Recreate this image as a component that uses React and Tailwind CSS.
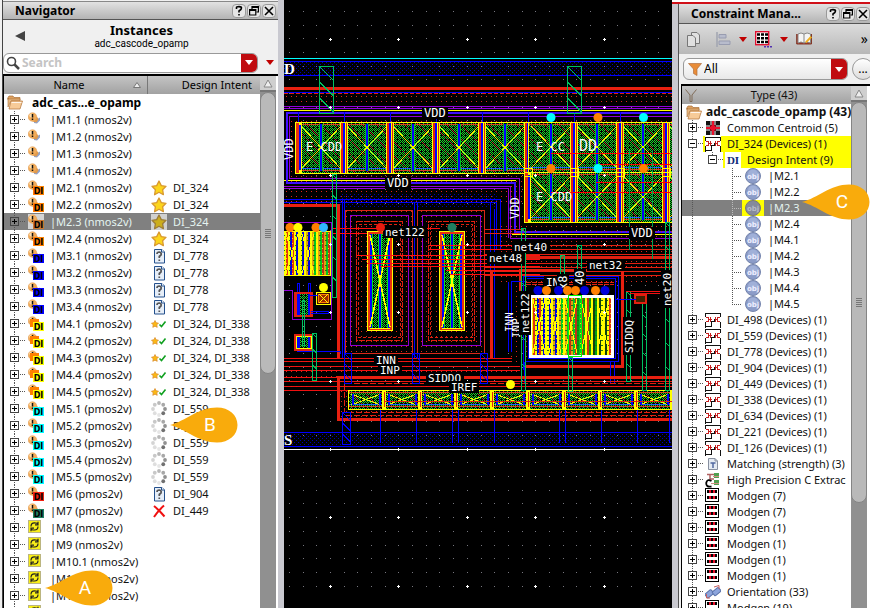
import React from "react";

const ORANGE = "#ff8000";

/* ---------- shared controls ---------- */

function TitleBar({ title, className }) {
  return (
    <header className={"flex items-center border-b border-[#555] bg-linear-to-b from-[#e2e2e2] to-[#b4b4b4] " + className}>
      <h2 className="flex-1 truncate text-[12px] leading-[18px] font-bold">{title}</h2>
      <div className="flex gap-px">
        {["Help", "Restore", "Close"].map((n) => (
          <button key={n} aria-label={n} className="h-3.5 w-3.5 rounded-[4px] border border-[#999] bg-[#e6e6e6]">
            <svg viewBox="0 0 12 12" className="h-3 w-3" fill="none" stroke="#000" strokeWidth="1.6">
              {n === "Help" && <path d="M3.5 4V2.5Q3.5 1.6 6 1.6T8.5 3Q8.500 4.500 6 6V7.500M6 9V10.500" />}
              {n === "Restore" && (
                <g strokeWidth="1.2">
                  <path d="M4 4V1.600H10.400V7H8.500M4 2.300H10.400" />
                  <path d="M1.600 4.600H7.800V10H1.600ZM1.600 5.300H7.800" />
                </g>
              )}
              {n === "Close" && <path d="M2 2L10 10M10 2L2 10" />}
            </svg>
          </button>
        ))}
      </div>
    </header>
  );
}

function Down({ fill = "#c00000" }) {
  return (
    <svg viewBox="0 0 8 5" className="h-[5px] w-2 shrink-0">
      <path d="M0 0H8L4 5Z" fill={fill} />
    </svg>
  );
}

function ScrollBar({ thumb }) {
  return (
    <div className="flex w-4 shrink-0 flex-col bg-[#909090]">
      <button aria-label="Scroll up" className="flex h-4 items-center justify-center border-b-2 border-[#777] bg-[#cfcfcf]">
        <svg viewBox="0 0 10 9" className="h-[9px] w-2.5">
          <path d="M1 8L5 1L9 8Z" fill="#eee" stroke="#888" />
        </svg>
      </button>
      <div className={"flex flex-col items-center justify-center gap-px rounded-b-lg rounded-t-lg border border-[#858585] bg-[#b9b9b9] " + thumb}>
        {[0, 1, 2, 3, 4].map((i) => (
          <i key={i} className="block h-px w-1.5 bg-[#777]" />
        ))}
      </div>
    </div>
  );
}

function Twig({ open, selected, h = 17, w = 20, last }) {
  const c = (h - 1) / 2;
  return (
    <button aria-label={open ? "Collapse" : "Expand"} className="shrink-0">
      <svg width={w} height={h} shapeRendering="crispEdges" className="block">
        <path d={`M6.500 0V${last ? c : h}M6 ${Math.floor(c) + 0.5}H17`} stroke="#555" strokeDasharray="1 1" fill="none" />
        <rect x="2.500" y={Math.floor(c) - 3.5} width="8" height="8" fill={selected ? "#808080" : "#fff"} stroke="#444" />
        <path d={`M4 ${Math.floor(c) + 0.5}H9` + (open ? "" : `M6.500 ${Math.floor(c) - 2}V${Math.floor(c) + 3}`)} stroke="#000" />
      </svg>
    </button>
  );
}

function Folder() {
  return (
    <svg viewBox="0 0 16 15" className="h-[15px] w-4 shrink-0">
      <path d="M1 2.500L2 1H6L7 2.500H13V5H1Z" fill="#dca060" stroke="#a97038" strokeWidth=".7" />
      <path d="M1 3V12L4 6H13V4H1Z" fill="#e8b880" stroke="#a97038" strokeWidth=".6" />
      <path d="M4 6H15.500L13 14H2Z" fill="#f7cb98" stroke="#b87c44" strokeWidth=".8" />
      <path d="M4.500 7.500H14.500" stroke="#fff" strokeWidth=".8" />
    </svg>
  );
}

/* ---------- navigator ---------- */

function DeviceIcon({ tag, selected }) {
  if (tag === "sync")
    return (
      <svg viewBox="0 0 18 17" className="h-[17px] w-[18px] shrink-0">
        <rect x=".5" y="1.500" width="12" height="12" fill="#f8ee18" stroke="#bbb580" />
        <g fill="none" stroke="#222" strokeWidth="1.200">
          <path d="M3 7.500Q3 3.800 6.500 3.800T9.500 5.300M10 2.800V5.800H7" />
          <path d="M10 7.500Q10 11 6.500 11T3.500 9.800M3 12.200V9.200H6" />
        </g>
      </svg>
    );
  return (
    <svg viewBox="0 0 18 17" className="h-[17px] w-[18px] shrink-0">
      {selected && <rect y="1" width="16" height="15" fill="#d4d4d4" />}
      <path d="M6 10L12 6.500V9.500L9 12.500L6 12Z" fill="#8fa2cc" />
      <path d="M5 6Q9.500 4.500 10.500 8.500L8.500 11.500L4.500 10.500Z" fill="#e09a4c" />
      <circle cx="4.500" cy="6" r="4.300" fill="#f2ab58" stroke="#dc9850" strokeWidth=".5" />
      <circle cx="3.300" cy="4.500" r="2" fill="#ffdca8" />
      <path d="M4.500 3V6.500M4.500 7.500V9" stroke="#111" strokeWidth="1.500" />
      {tag === "#ffff00" && <rect x="2" y="4" width="9" height="8" fill={ORANGE} />}
      {tag && (
        <g>
          <rect x="5" y="7" width="11" height="9" fill={selected ? "#c87830" : tag} />
          <text x="10.500" y="14.500" textAnchor="middle" fontSize="8" fontWeight="bold" fontFamily="DejaVu Sans">
            DI
          </text>
        </g>
      )}
    </svg>
  );
}

const STAR = "M8 1L10.300 5.600L15 6.300L11.600 9.700L12.400 14.700L8 12.300L3.600 14.700L4.400 9.700L1 6.300L5.700 5.600Z";

function StatusIcon({ kind, selected }) {
  return (
    <svg viewBox="0 0 16 16" className="h-4 w-4 shrink-0">
      {selected && <rect width="16" height="16" fill="#d0d0d0" />}
      {kind === "star" && (
        <path d={STAR} fill={selected ? "#ccae1c" : "#fcd51c"} stroke={selected ? "#9c7c38" : "#d89830"} strokeWidth="1.300" strokeLinejoin="round" />
      )}
      {kind === "ok" && (
        <g>
          <path d={STAR} transform="translate(0 4) scale(.5)" fill="#fcb914" stroke="#d88c30" strokeWidth="1.500" />
          <path d="M8.500 8.500L10.500 10.500L14.500 5.500" fill="none" stroke="#10a020" strokeWidth="1.600" />
        </g>
      )}
      {kind === "ask" && (
        <g>
          <path d="M3.500 1.500H11L13.500 4V15H3.500Z" fill="#e6eef8" stroke="#24508c" />
          <path d="M10.500 1.500V4H13.500" fill="#fff" stroke="#24508c" />
          <path d="M6 6Q6 4 8.300 4Q10.800 4.500 10 7L8.300 8.500V10M8.300 11.500V13" fill="none" stroke="#555" strokeWidth="1.700" />
        </g>
      )}
      {kind === "wait" &&
        [0, 1, 2, 3, 4, 5, 6, 7].map((i) => (
          <circle
            key={i}
            cx={8 + 6 * Math.cos((i * Math.PI) / 4)}
            cy={8 + 6 * Math.sin((i * Math.PI) / 4)}
            r="1.900"
            fill={["#909090", "#707070", "#e6e6e6", "#dedede", "#d4d4d4", "#c8c8c8", "#b8b8b8", "#a8a8a8"][i]}
          />
        ))}
      {kind === "bad" && <path d="M3 3Q8 7 13.500 13.500M13 2.500Q7 8 3 14" fill="none" stroke="#f01010" strokeWidth="2" />}
    </svg>
  );
}

const instances = [
  ...["M1.1", "M1.2", "M1.3", "M1.4"].map((n) => [n, "nmos2v"]),
  ...["M2.1", "M2.2", "M2.3", "M2.4"].map((n) => [n, "nmos2v", ORANGE, "star", "DI_324"]),
  ...["M3.1", "M3.2", "M3.3", "M3.4"].map((n) => [n, "nmos2v", "#0000ff", "ask", "DI_778"]),
  ...["M4.1", "M4.2", "M4.3", "M4.4", "M4.5"].map((n) => [n, "pmos2v", "#ffff00", "ok", "DI_324, DI_338"]),
  ...["M5.1", "M5.2", "M5.3", "M5.4", "M5.5"].map((n) => [n, "pmos2v", "#00ffff", "wait", "DI_559"]),
  ["M6", "pmos2v", "#f02010", "ask", "DI_904"],
  ["M7", "pmos2v", "#208060", "bad", "DI_449"],
  ...["M8", "M9", "M10.1", "M10.2", "M10.3", "M10.4"].map((n) => [n, "nmos2v", "sync"]),
];

function Navigator() {
  return (
    <aside className="flex w-[284px] shrink-0 border-r-[6px] border-[#c9c9d0] bg-[#f0f0f0] pl-0.5">
      <div className="flex min-w-0 flex-1 flex-col border-l border-[#444] pt-px">
        <TitleBar title="Navigator" className="h-[19px] shrink-0 border-t border-t-[#888] pr-0.5 pl-3" />
        <div className="flex h-8 shrink-0 items-center pl-3">
          <button aria-label="Back">
            <svg viewBox="0 0 10 10" className="h-2.5 w-2.5">
              <path d="M10 0V10L0 5Z" fill="#444" />
            </svg>
          </button>
          <div className="flex-1 pr-5 text-center">
            <h3 className="text-[13px] leading-[14px] font-bold">Instances</h3>
            <p className="font-[Roboto,sans-serif] text-[10px] leading-[13px]">adc_cascode_opamp</p>
          </div>
        </div>
        <div className="flex h-[22px] shrink-0 items-center gap-2 pb-px">
          <label className="flex h-5 flex-1 items-center overflow-hidden rounded-md border border-[#999] bg-white pl-0.5">
            <svg viewBox="0 0 14 14" className="h-3.5 w-3.5 shrink-0" fill="none" stroke="#444">
              <circle cx="5.500" cy="5.500" r="4" strokeWidth="1.600" />
              <path d="M8.500 8.500L13 13" strokeWidth="2.500" />
            </svg>
            <input aria-label="Search" placeholder="Search" className="ml-0.5 min-w-0 flex-1 text-[12px] font-bold outline-none placeholder:text-[#c4c4c4]" />
            <button aria-label="Search options" className="flex h-full w-4 items-center justify-center bg-[#c00c10]">
              <Down fill="#fff" />
            </button>
          </label>
          <button aria-label="Filter" className="pr-1">
            <Down />
          </button>
        </div>
        <div className="flex min-h-0 flex-1 border-t-2 border-l border-black bg-white">
          <div className="min-w-0 flex-1 overflow-hidden">
            <table className="w-full table-fixed border-collapse">
              <thead>
                <tr className="h-[18px] bg-linear-to-b from-[#c4c4c4] to-[#a2a2a2] text-[11px] leading-[16px]">
                  <th className="w-[143px] border-r border-[#777] p-0 font-normal">
                    <span className="flex items-center justify-end gap-12 pr-1.5">
                      Name
                      <svg viewBox="0 0 8 6" className="h-1.5 w-2">
                        <path d="M.5 5.500L4 .5L7.500 5.500Z" fill="#eee" stroke="#777" />
                      </svg>
                    </span>
                  </th>
                  <th className="p-0 pr-2 text-right font-normal">Design Intent</th>
                </tr>
              </thead>
              <tbody className="text-[11px] leading-[17px] whitespace-pre">
                <tr className="h-[17px]">
                  <td colSpan={2} className="p-0">
                    <span className="flex h-[17px] items-center gap-1.5 pl-[3px] text-[12px] font-bold">
                      <Folder /> adc_cas...e_opamp
                    </span>
                  </td>
                </tr>
                {instances.map(([n, type, tag, kind, intent]) => {
                  const sel = n === "M2.3";
                  return (
                    <tr key={n} className={sel ? "h-[17px] bg-[#808080] text-[#e4f4f0]" : "h-[17px] text-[#111]"}>
                      <td className="p-0">
                        <span className="flex h-[17px] items-center pl-1">
                          <Twig selected={sel} />
                          <DeviceIcon tag={tag} selected={sel} />
                          <span className="pl-1">{`|M${n.slice(1)} (${type})`}</span>
                        </span>
                      </td>
                      <td className="p-0">
                        {kind && (
                          <span className="flex h-[17px] items-center gap-1.5 pl-1">
                            <StatusIcon kind={kind} selected={sel} />
                            {intent}
                          </span>
                        )}
                      </td>
                    </tr>
                  );
                })}
              </tbody>
            </table>
          </div>
          <ScrollBar thumb="h-[282px]" />
          <div className="w-0.5 bg-white" />
        </div>
      </div>
    </aside>
  );
}

/* ---------- layout canvas ---------- */

const gridDots = Array.from({ length: 29 }, (_, i) =>
  Array.from({ length: 43 }, (_, j) => `M${Math.round(289 + i * 13.68)} ${Math.round(11 + j * 13.68)}h1v1h-1z`).join("")
).join("");

const Ladder = ({ x, y, w, h, c = "#00c060", n = 3 }) => (
  <g stroke={c} fill="none">
    <rect x={x + 0.5} y={y + 0.5} width={w} height={h} />
    {Array.from({ length: n }, (_, i) => {
      const top = y + (i * h) / n;
      return <path key={i} d={`M${x} ${top}L${x + w} ${top + Math.min(h / n, w)}`} />;
    })}
  </g>
);

const Note = ({ x, y, t, w, v, s = 12, bg = true }) => (
  <g transform={v ? `translate(${x} ${y}) rotate(-90)` : `translate(${x} ${y})`}>
    {bg && <rect x="-2" y="-10" width={w + 4} height="12" fill="#000" />}
    <text fill="#fff" fontSize={s} fontFamily="DejaVu Sans Mono, monospace">
      {t}
    </text>
  </g>
);

function ArrayBlock({ x, y, h, count, pitch }) {
  const w = count * pitch;
  const small = pitch < 40;
  return (
    <g>
      <rect x={x} y={y} width={w} height={h} fill="#000" />
      <rect x={x} y={y} width={w} height={h} fill="url(#mesh)" />
      <rect x={x} y={y} width={w} height={h} fill="url(#streak)" />
      <path d={`M${x} ${y + 2.5}H${x + w}M${x} ${y + h - 2.5}H${x + w}`} stroke="#d84020" />
      <path d={`M${x} ${y + h - 4.5}H${x + w}`} stroke="#2060ff" />
      {Array.from({ length: count }, (_, i) => {
        const l = x + i * pitch;
        const r = l + pitch;
        const m = l + pitch / 2;
        return (
          <g key={i}>
            {!small && (
              <g>
                <rect x={m - 2} y={y + 2} width="4" height={h - 4} fill="#00c020" />
                <rect x={m - 1} y={y + 2} width="2" height={h - 4} fill="#0000ff" />
              </g>
            )}
            <path d={`M${l + 3} ${y + 4}L${r - 3} ${y + h - 4}M${r - 3} ${y + 4}L${l + 3} ${y + h - 4}`} stroke="#f0f000" />
            {small ? (
              <g>
                <path d={`M${l + 5} ${y + 4}V${y + h - 4}M${r - 4} ${y + 4}V${y + h - 4}`} stroke="#0000ff" strokeWidth="2" />
                <rect x={r - 2} y={y} width="4" height={h} fill="#ffff00" />
                <rect x={r} y={y + 2} width="1" height={h - 4} fill="#e02010" />
              </g>
            ) : (
              <g>
                <rect x={r - 4} y={y} width="8" height={h} fill="#ffff00" />
                <rect x={r - 3} y={y} width="2" height={h} fill="#e02010" />
                <rect x={r - 1} y={y} width="2" height={h} fill="#0000ff" />
                <rect x={r + 2} y={y} width="1" height={h} fill="#e02010" />
              </g>
            )}
          </g>
        );
      })}
      <rect x={x + 0.5} y={y + 0.5} width={w} height={h} fill="none" stroke="#ffff00" />
    </g>
  );
}

const LeftEdge = ({ x, y, h }) => (
  <g>
    <rect x={x} y={y} width="7" height={h + 1} fill="#ffff00" />
    <rect x={x + 1} y={y + 1} width="3" height={h - 1} fill="#e83010" />
    <rect x={x + 4} y={y + 3} width="2" height={h - 6} fill="#0000ff" />
  </g>
);

const Mos = ({ x }) => (
  <g>
    <rect x={x - 22} y="210" width="67" height="143" fill="#000" stroke="#d82818" />
    <rect x={x - 22} y="210" width="67" height="143" fill="url(#rdots)" />
    <rect x={x - 16.5} y="215.500" width="58" height="130" fill="none" stroke="#9000d0" />
    <rect x={x - 10.500} y="221.500" width="46" height="119" fill="none" stroke="#e02010" strokeDasharray="6 1" />
    <rect x={x - 8.500} y="224.500" width="42" height="113" fill="none" stroke="#e02010" strokeDasharray="3 2" />
    <rect x={x} y="231" width="26" height="100" fill="#ffff00" />
    <rect x={x + 1} y="232" width="24" height="98" fill="#e83010" />
    <rect x={x + 3} y="234" width="20" height="94" fill="#0000ff" />
    <rect x={x + 5} y="234" width="16" height="94" fill="#000" />
    <rect x={x + 5} y="234" width="16" height="94" fill="url(#mesh)" />
    <rect x={x + 12} y="234" width="2" height="94" fill="#0000ff" />
    <path d={`M${x + 5.5} 234V328M${x + 11.5} 234V328M${x + 14.5} 234V328M${x + 20.5} 234V328`} stroke="#00e020" />
    <path d={`M${x + 3} 235L${x + 23} 327M${x + 23} 235L${x + 3} 327`} stroke="#ffff00" strokeWidth="1.500" />
    <path d={`M${x + 3} 328.500H${x + 23}`} stroke="#ffff00" />
  </g>
);

const SmallMos = ({ y, h }) => (
  <g>
    <rect x="294" y={y} width="19" height={h} fill="#e02010" />
    <rect x="297" y={y + 2} width="13" height={h - 4} fill="#0000ff" />
    <rect x="300" y={y + 2} width="8" height={h - 4} fill="#000" />
    <rect x="300" y={y + 2} width="8" height={h - 4} fill="url(#mesh)" />
  </g>
);

function Stripes({ x, y, w, h }) {
  const cols = ["#ffff00", "#00a010", "#e0a010", "#ffff00", "#104010", "#c03018", "#ffff00", "#e03010", "#ffff00", "#00c820", "#0000e0"];
  return (
    <g>
      <rect x={x} y={y} width={w} height={h} fill="#103000" />
      {Array.from({ length: Math.floor(w / 2) }, (_, i) => (
        <rect key={i} x={x + i * 2} y={y} width="2" height={h} fill={cols[(i * 7 + (i >> 2)) % cols.length]} />
      ))}
      <rect x={x} y={y} width={w} height={h} fill="url(#speck)" />
      {Array.from({ length: Math.floor(w / 16) }, (_, i) => (
        <path key={i} d={`M${x + i * 16 + 2} ${y + 2}L${x + i * 16 + 14} ${y + h - 2}M${x + i * 16 + 14} ${y + 2}L${x + i * 16 + 2} ${y + h - 2}`} stroke="#ffff00" />
      ))}
    </g>
  );
}

const pins = [
  [551, 117.5, "#00ffff"], [598, 117.5, ORANGE], [643.5, 117.5, "#00ffff"],
  [551, 168.5, ORANGE], [598, 168.5, "#00ffff"], [643.5, 168.5, ORANGE],
  [290, 227.5, ORANGE], [298, 227.5, "#ffff00"], [316, 227.5, ORANGE], [323.5, 227.5, "#30b8ff"],
  [380.5, 227.5, "#e81c10"], [452, 227.5, "#208060"], [323.5, 287.5, "#ffff00"], [510.5, 384.5, "#ffff00"],
  [538, 290.5, "#0000d8"], [546.5, 290.5, ORANGE], [558.5, 290.5, "#0000d8"], [567.5, 290.5, ORANGE],
  [575.5, 290.5, ORANGE], [584.5, 290.5, "#0000d8"], [595.5, 290.5, ORANGE], [605, 290.5, "#0000d8"],
];

function LayoutCanvas() {
  return (
    <main className="min-w-0 flex-1 overflow-hidden bg-black">
      <svg viewBox="284 0 388 608" preserveAspectRatio="xMinYMin slice" className="block h-full w-full" shapeRendering="crispEdges" role="img" aria-label="Layout view">
        <defs>
          <pattern id="rdots" width="5" height="5" patternUnits="userSpaceOnUse">
            <rect x="1" y="1" width="1" height="1" fill="#e02818" />
          </pattern>
          <pattern id="bdots" width="4" height="4" patternUnits="userSpaceOnUse">
            <rect width="1" height="1" fill="#0000b0" />
            <rect x="2" y="2" width="1" height="1" fill="#0000b0" />
          </pattern>
          <pattern id="mesh" width="4" height="4" patternUnits="userSpaceOnUse">
            <path d="M0 0h1v1h1v1h1v1h1v1h-1v-1h-1v-1h-1v-1h-1zM2 0h1v1h-1zM0 2h1v1h-1zM3 1h1v1h-1z" fill="#18d828" />
          </pattern>
          <pattern id="streak" width="14" height="14" patternUnits="userSpaceOnUse">
            <path d="M0 0L14 14" stroke="#b84030" strokeWidth="1" strokeDasharray="2 1" />
          </pattern>
          <pattern id="speck" width="6" height="5" patternUnits="userSpaceOnUse">
            <rect x="1" width="2" height="1" fill="#207010" />
            <rect x="4" y="3" width="1" height="1" fill="#ffe000" />
          </pattern>
        </defs>
        <rect x="284" width="388" height="608" fill="#000" />
        <path d={gridDots} fill="#77777f" />

        {/* supply rails */}
        <rect x="284" y="62" width="388" height="13" fill="url(#bdots)" />
        <rect x="284" y="96" width="388" height="10" fill="url(#rdots)" />
        <rect x="284" y="113" width="388" height="90" fill="url(#rdots)" />
        <rect x="340" y="194" width="158" height="14" fill="url(#bdots)" />
        <g fill="none" strokeWidth="1">
          <path d="M284 58.500H672" stroke="#00ffff" />
          <path d="M284 61.500H672M284 75.500H672M284 92.500H672" stroke="#0000ff" />
          <path d="M284 88.500H672" stroke="#e82010" strokeWidth="3" />
          <path d="M284 93.500H672" stroke="#e02010" strokeDasharray="4 2" />
          <path d="M284 106.500H672M284 108.500H672M672 116.500H289.500V178.500H519.500V230" stroke="#9000d8" />
          <path d="M284 110.500H672M284 180.500H516" stroke="#ffff00" />
          <path d="M512 234.500H672" stroke="#ffff00" />
          <path d="M672 112.500H286.500V182.500H514.500V232H672" stroke="#4010ff" strokeWidth="2" />
          <path d="M284 186.500H510.500V238.500H672M284 188.500H508V238" stroke="#9000d8" />
          <path d="M284 199.500H500V250M284 202.500H496V250M344.500 199V358M414.500 203V358M417.500 203V358M490.500 203V358M494.500 209V358M342.500 199V358" stroke="#0000ff" />
        </g>

        <ArrayBlock x={298} y={122} h={51} count={5} pitch={46} />
        <LeftEdge x={295} y={122} h={51} />
        <ArrayBlock x={528} y={122} h={50} count={4} pitch={46} />
        <ArrayBlock x={528} y={172} h={50} count={4} pitch={46} />
        <LeftEdge x={524} y={172} h={50} />
        <g fill="#ffff00">
          {[528, 574, 620, 666].map((x) => (
            <path key={x} d={`M${x - 4} 168h8v8h-8z`} fill="none" stroke="#ffff00" />
          ))}
        </g>
        <g stroke="#0000ff">
          {[298, 344, 390, 436, 482, 528, 574, 620].map((x) => (
            <path key={x} d={`M${x + 0.5} 112V122`} />
          ))}
        </g>

        {/* routing to the right of the arrays */}
        <rect x="498" y="224" width="174" height="60" fill="url(#rdots)" />
        <g stroke="#e02010">
          {[229, 233, 245, 249, 254, 263, 267, 271, 275].map((y, i) => (
            <path key={y} d={`M${i < 2 ? 474 : 470} ${y + 0.5}H${i < 2 ? 524 : 672}`} />
          ))}
          <path d="M524 257.500H672" strokeWidth="3" />
          <path d="M551 153.500H672M600 164.500H672M596 182.500H672M551 192.500H672" stroke="#ff0000" />
        </g>

        <path d="M284 205.500H338.500V358" stroke="#e82010" strokeWidth="3" fill="none" />
        <path d="M284 222.500H331.500V319.500H292.500V290.500H284" stroke="#9000d8" fill="none" />
        <Mos x={367} />
        <Mos x={439} />
        <g stroke="#ff1010">
          {[[357, 255], [362, 259], [367, 263], [380, 266], [429, 245], [429, 249], [446, 270], [450, 274]].map(([x, y]) => (
            <path key={y} d={`M${x} ${y + 0.5}H540`} />
          ))}
          <path d="M332 228.500H440M332 233.500H367" />
        </g>

        <Stripes x={284} y={232} w={46} h={43} />
        <path d="M284 231.500H330.500V275.500H284" stroke="#ffff00" fill="none" />
        <SmallMos y={292} h={25} />
        <SmallMos y={334} h={17} />
        <path d="M296.500 336.500H311.500V348.500H296.500Z" stroke="#ffff00" fill="none" />
        <rect x="316.500" y="292.500" width="14" height="12" fill="#401000" stroke="#ffff00" />
        <rect x="318.500" y="294.500" width="10" height="8" fill="#a02800" stroke="#ff8000" />
        <path d="M319 294L328 303M328 294L319 303" stroke="#ffff00" />
        <g stroke="#0000ff" fill="none">
          <path d="M297.500 292V283.500H299.500V292M308.500 292V283.500H310.500V292M310 295.500H318M311 311.500H328.500V313.500H311M297 351.500H340V354" />
        </g>

        {/* matched group */}
        <rect x="508" y="280" width="22" height="84" fill="url(#rdots)" />
        <g fill="none">
          <path d="M491.500 270V358.500M520.500 292V270H622.500V366.500H524" stroke="#e82010" strokeWidth="3" />
          <path d="M508.500 352V281.500M511.500 352V281.500H526M523.500 370V276.500H618.500V361.500H526M526.500 278.500H615.500V358.500H528V300M524 383V362M614.500 362V383H610.500V362" stroke="#0000ff" />
          <path d="M526 282.500H614M526 284.500H614" stroke="#e02010" strokeDasharray="5 1" />
        </g>
        <Stripes x={531} y={297} w={80} h={58} />
        <rect x="530" y="296" width="82" height="60" fill="none" stroke="#fff" strokeWidth="3" />
        <path d="M568.500 297V295.500H581.500V356H568.500Z" fill="none" stroke="#00ff00" />

        {/* lower rails */}
        <g stroke="#f01010">
          {[358, 361, 366, 370, 377, 381, 386, 390].map((y, i) => (
            <path key={y} d={`M284 ${y + 0.5}H${i < 2 ? 512 : i < 4 ? 520 : 672}`} />
          ))}
        </g>
        <rect x="284" y="359" width="234" height="32" fill="url(#rdots)" />
        <rect x="340" y="378" width="332" height="42" fill="url(#rdots)" />
        <path d="M672 377.500H338.500V419.500H672" fill="none" stroke="#e82010" strokeWidth="3" />
        <path d="M672 383.500H344.500V412.500H672M346 415.500H672" fill="none" stroke="#e02010" strokeDasharray="6 2" />
        <ArrayBlock x={348} y={390} h={19} count={9} pitch={36} />
        <path d="M384 401.500H672" stroke="#e02010" />
        <rect x="284" y="433" width="388" height="13" fill="url(#bdots)" />
        <path d="M284 432.500H672M284 446.500H672" stroke="#0000ff" />
        <g stroke="#0000ff">
          {[380, 416, 452, 458, 494, 559, 565, 601, 637, 669].map((x) => (
            <path key={x} d={`M${x + 0.5} 410V443`} />
          ))}
        </g>
        <Ladder x={342} y={412} w={8} h={32} c="#0000ff" n={3} />
        <Ladder x={344} y={353} w={7} h={30} c="#0000ff" />
        <Ladder x={412} y={353} w={7} h={30} c="#0000ff" />
        <Ladder x={480} y={353} w={7} h={30} c="#0000ff" />
        <path d="M284 449.500H672" stroke="#fff" />

        {/* vias */}
        <Ladder x={319} y={66} w={14} h={47} />
        <Ladder x={567} y={66} w={14} h={47} />
        <Ladder x={332} y={174} w={4} h={123} n={6} />
        <Ladder x={302} y={300} w={2} h={45} />
        <Ladder x={312} y={333} w={4} h={47} />
        <Ladder x={521} y={228} w={4} h={162} n={6} />
        <Ladder x={560} y={255} w={4} h={26} n={2} />
        <Ladder x={577} y={245} w={4} h={34} n={2} />
        <Ladder x={568} y={357} w={4} h={34} n={2} />
        <path d="M629.500 150V250M652.500 150V259" stroke="#00a050" fill="none" />
        <Ladder x={626} y={291} w={4} h={90} n={5} />
        <Ladder x={642} y={295} w={4} h={95} n={5} />
        <Ladder x={665} y={222} w={4} h={168} n={7} />
        <rect x="635" y="295" width="11" height="8" fill="#402000" stroke="#e02010" strokeWidth="2" />
        <path d="M626 291.500H660M630 293.500H660" stroke="#f01010" />
        <path d="M616 299.500H636" stroke="#0000ff" />

        {/* major grid marks */}
        <g fill="#fff">
          {[0, 1, 2, 3, 4].flatMap((i) =>
            [-1, 0, 1, 2, 3, 4, 5, 6, 7].map((j) => {
              const x = Math.round(330 + i * 68.4);
              const y = Math.round(107 + j * 68.4);
              return <path key={i + "_" + j} d={`M${x - 1} ${y}h3v1h-3zM${x} ${y - 1}h1v3h-1z`} />;
            })
          )}
        </g>

        <g shapeRendering="auto">
          <Note x={424} y={117} t="VDD" w={22} />
          <Note x={387} y={187} t="VDD" w={22} />
          <Note x={306} y={151} t="E CDD" w={36} bg={false} />
          <Note x={536} y={151} t="E CC" w={32} bg={false} />
          <Note x={579} y={151} t="DD" w={16} s={15} bg={false} />
          <Note x={536} y={201} t="E CDD" w={36} bg={false} />
          <Note x={293} y={160} t="VDD" w={22} v bg={false} />
          <Note x={519} y={219} t="VDD" w={22} v bg={false} />
          <Note x={631} y={237} t="VDD" w={22} />
          <Note x={385} y={236} t="net122" w={40} s={11} />
          <Note x={514} y={251} t="net40" w={34} s={11} />
          <Note x={489} y={262} t="net48" w={34} s={11} />
          <Note x={589} y={269} t="net32" w={34} s={11} />
          <Note x={546} y={286} t="IN" w={12} s={11} />
          <Note x={567} y={290} t="x8" w={14} v />
          <Note x={584} y={285} t="40" w={14} v />
          <Note x={513} y={332} t="INN" w={20} v s={11} bg={false} />
          <Note x={520} y={338} t="INP" w={20} v s={11} bg={false} />
          <Note x={529} y={333} t="net122" w={40} v s={11} />
          <Note x={633} y={353} t="SIDDQ" w={34} v s={11} />
          <Note x={671} y={306} t="net20" w={34} v s={11} />
          <Note x={376} y={364} t="INN" w={20} s={11} />
          <Note x={380} y={374} t="INP" w={20} s={11} />
          <Note x={428} y={382} t="SIDDQ" w={34} s={11} />
          <Note x={451} y={391} t="IREF" w={26} s={11} />
          <g fill="#fff" fontFamily="Liberation Serif, serif" fontWeight="bold">
            <text x="284" y="74" fontSize="15">D</text>
            <text x="284" y="445" fontSize="15">S</text>
          </g>
          {pins.map(([x, y, c]) => (
            <circle key={x + "," + y} cx={x} cy={y} r="4.500" fill={c} />
          ))}
        </g>
      </svg>
    </main>
  );
}

/* ---------- constraint manager ---------- */

function ConstraintIcon({ kind }) {
  return (
    <svg viewBox="0 0 16 16" className="h-4 w-4 shrink-0">
      {kind === "cc" && (
        <g>
          <rect x="1" y="1" width="14" height="14" fill="#111" />
          <path d="M6 1V5M10 1V5M6 11V15M10 11V15M1 6H5M1 10H5M11 6H15M11 10H15" stroke="#fff" />
          <path d="M8 1V15M1 8H15" stroke="#e8102c" strokeWidth="2.200" />
          <path d="M5.500 5.500L10.500 10.500M10.500 5.500L5.500 10.500" stroke="#e8102c" strokeWidth="1.500" />
        </g>
      )}
      {kind === "di" && (
        <g fill="none" strokeWidth="1" shapeRendering="crispEdges">
          <rect width="16" height="16" fill="#fff" />
          <path d="M.5 5V1.500H15.500V5M.5 10V15.500M.5 14.500H6.500V9.500H9.500V7.500H12M15.500 10V15.500" stroke="#111" />
          <path d="M1 5.500H3.500V9.500H1M3.500 7.500H6.500M5.500 5V10M15 5.500H12.500V9.500H15M12.500 7.500H10.500M10.500 5V10" stroke="#c82020" />
        </g>
      )}
      {kind === "intent" && (
        <g>
          <rect width="16" height="16" fill="#fff" />
          <text x="8" y="12" fontSize="11" textAnchor="middle" fontFamily="Liberation Serif" fontWeight="bold" fill="#102878">
            DI
          </text>
        </g>
      )}
      {kind === "obj" && (
        <g>
          <circle cx="8" cy="8" r="7.500" fill="#8c9cc8" stroke="#7484ac" />
          <circle cx="8" cy="6.500" r="5" fill="#a0b0d8" />
          <text x="8" y="10.500" fontSize="7" textAnchor="middle" fontFamily="DejaVu Sans" fontWeight="bold" fill="#eef">
            obj
          </text>
        </g>
      )}
      {kind === "objsel" && (
        <g>
          <circle cx="8" cy="8" r="7.500" fill="#858a9c" stroke="#777" />
          <text x="8" y="10.500" fontSize="7" textAnchor="middle" fontFamily="DejaVu Sans" fontWeight="bold" fill="#b8bcc8">
            obj
          </text>
        </g>
      )}
      {kind === "match" && (
        <g>
          <path d="M3.500 2.500H10L12.500 5V13.500H3.500Z" fill="#e4eaf2" stroke="#8890a0" />
          <path d="M10 2.500V5H12.500" fill="none" stroke="#8890a0" />
          <path d="M5.500 7H10.500M8 7V12" stroke="#5068a0" strokeWidth="1.500" />
        </g>
      )}
      {kind === "hp" && (
        <g>
          <path d="M2 2.500H9M5 3V7H9" stroke="#b06060" strokeWidth="1.500" fill="none" />
          <rect x="9" y="1" width="5" height="5" fill="#50a050" />
          <rect x="9" y="8" width="5" height="5" fill="#50a050" />
          <path d="M6 11.500H14M8 4.500H14" stroke="#d09080" />
          <path d="M6.500 9Q2 6.500 1.200 11Q1 15.500 6.500 14.500" stroke="#000" strokeWidth="1.800" fill="none" />
        </g>
      )}
      {kind === "modgen" && (
        <g shapeRendering="crispEdges">
          <rect x=".5" y=".5" width="13" height="13" fill="#fff" stroke="#000" />
          <path d="M2 3.500H12M2 9.500H12" stroke="#e8102c" strokeWidth="3" />
          <path d="M2 3.500H12M2 9.500H12" stroke="#000" strokeWidth="3" strokeDasharray="2 2" />
        </g>
      )}
      {kind === "orient" && (
        <g>
          <g transform="rotate(-40 8 8)">
            <rect x="0" y="4.500" width="8" height="5" rx="1" fill="#8ca4dc" stroke="#5870a8" />
            <rect x="7" y="7.500" width="8" height="5" rx="1" fill="#8ca4dc" stroke="#5870a8" />
          </g>
          <path d="M9 3L14 1.500V5M1.500 10V14H5" stroke="#c86060" fill="none" />
        </g>
      )}
    </svg>
  );
}

const groups = [
  ...["DI_498", "DI_559", "DI_778", "DI_904", "DI_449", "DI_338", "DI_634", "DI_221", "DI_126"].map((n) => [n + " (Devices) (1)", "di"]),
  ["Matching (strength) (3)", "match"],
  ["High Precision C Extrac", "hp"],
  ...[7, 7, 1, 1, 1, 1].map((n) => [`Modgen (${n})`, "modgen"]),
  ["Orientation (33)", "orient"],
  ["Modgen (19)", "modgen"],
];

const objects = ["M2.1", "M2.2", "M2.3", "M2.4", "M4.1", "M4.2", "M4.3", "M4.4", "M4.5"];

function TreeRow({ label, kind, open }) {
  return (
    <div className="flex h-4 items-center pl-1">
      <Twig open={open} h={16} w={17} />
      <span className={open ? "flex flex-1 items-center gap-1.5 bg-[#ffff00] pl-0.5" : "flex flex-1 items-center gap-1.5 pl-0.5"}>
        <ConstraintIcon kind={kind} />
        {label}
      </span>
    </div>
  );
}

function TreeStem() {
  return (
    <svg width="24" height="16" shapeRendering="crispEdges" className="shrink-0">
      <path d="M10.500 0V16" stroke="#555" strokeDasharray="1 1" />
    </svg>
  );
}

function ConstraintManager() {
  return (
    <aside className="flex w-[198px] shrink-0 flex-col border-t-2 border-white bg-[#f0f0f0]">
      <div className="h-0.5 shrink-0 bg-[#d01018]" />
      <div className="flex min-h-0 flex-1 border-l-[6px] border-[#c9c9d0]">
        <div className="flex min-w-0 flex-1 flex-col border-l border-[#555]">
          <TitleBar title="Constraint Mana..." className="h-5 shrink-0 pl-3" />
          <div className="flex h-[30px] shrink-0 items-center bg-linear-to-b from-[#dcdcdc] to-[#b8b8b8] pl-2">
            <button aria-label="Copy">
              <svg viewBox="0 0 13 15" className="h-[15px] w-[13px]" fill="#e0e0e0" stroke="#777">
                <path d="M4.500 .5H10L12.500 3V11.500H4.500Z" />
                <path d="M.5 3.500H6L8.500 6V14.500H.5Z" />
              </svg>
            </button>
            <button aria-label="Align" className="ml-4">
              <svg viewBox="0 0 15 15" className="h-[15px] w-[15px]">
                <path d="M1 0V15" stroke="#a0a4b0" strokeWidth="1.500" />
                <path d="M3 2.500H10V6H3ZM3 9H14V12.500H3Z" fill="#b8bccc" stroke="#989cb0" />
              </svg>
            </button>
            <button aria-label="Align options" className="ml-2">
              <Down />
            </button>
            <button aria-label="Modgen" className="ml-2">
              <svg viewBox="0 0 17 17" className="h-[17px] w-[17px]">
                <rect x=".7" y=".7" width="13" height="13" fill="#fff" stroke="#e01030" strokeWidth="1.400" />
                <path d="M2 3.500H13M2 7.200H13M2 11H13" stroke="#000" strokeWidth="2.600" strokeDasharray="3 1" />
                <path d="M9 15.800H17" stroke="#5030b0" strokeWidth="1.500" strokeDasharray="2 1" />
              </svg>
            </button>
            <button aria-label="Modgen options" className="ml-2">
              <Down />
            </button>
            <button aria-label="Notes" className="ml-2">
              <svg viewBox="0 0 17 14" className="h-3.5 w-[17px]">
                <path d="M.7 2V12H15.500V2" fill="#a83828" stroke="#803828" />
                <path d="M2 2Q5 0 8 2Q11 0 14.500 2V11Q11 9 8 11Q5 9 2 11Z" fill="#f4f4f4" stroke="#888" />
                <path d="M8 2V11" stroke="#888" />
                <path d="M9 10L14.500 4L16 5.500L10.500 11Z" fill="#f0b020" />
              </svg>
            </button>
            <button aria-label="More" className="mr-0.5 ml-auto text-[14px] leading-4">»</button>
          </div>
          <div className="flex h-[30px] shrink-0 items-center gap-1 overflow-hidden pl-1">
            <label className="relative flex h-[22px] w-[165px] shrink-0 items-center overflow-hidden rounded-md border border-[#999] bg-linear-to-b from-white to-[#e8e8e8] pl-1">
              <svg viewBox="0 0 14 13" className="h-[13px] w-3.5 shrink-0">
                <path d="M.5 .5H13.500L9 6V12.500L5.500 10.500V6Z" fill="#e88c38" stroke="#b07040" strokeWidth=".7" />
              </svg>
              <select aria-label="Filter" className="h-full min-w-0 flex-1 appearance-none pl-0.5 text-[12px] outline-none">
                <option>All</option>
              </select>
              <span className="flex h-full w-4 items-center justify-center bg-[#c00c10]">
                <Down fill="#fff" />
              </span>
            </label>
            <button aria-label="Browse" className="h-[22px] w-[22px] shrink-0 rounded-full border border-[#999] bg-linear-to-b from-white to-[#ddd] text-[12px] leading-4">...</button>
          </div>
          <div className="ml-0.5 flex min-h-0 flex-1 border-t-2 border-l border-black bg-white">
            <div className="min-w-0 flex-1 overflow-hidden text-[11px] leading-4 whitespace-pre text-[#111]">
              <div className="flex h-[18px] items-center bg-linear-to-b from-[#c4c4c4] to-[#a2a2a2] pl-[3px]">
                <svg viewBox="0 0 12 13" className="h-[13px] w-3 shrink-0">
                  <path d="M.5 .5L5 6V12.500H7V6L11.500 .5" fill="none" stroke="#806c58" />
                </svg>
                <span className="flex-1 text-center">Type (43)</span>
              </div>
              <div className="flex h-4 items-center gap-1 pl-1 text-[12px] font-bold">
                <Folder />
                <span>adc_cascode_opamp (43)</span>
              </div>
              <TreeRow label="Common Centroid (5)" kind="cc" />
              <TreeRow label="DI_324 (Devices) (1)" kind="di" open />
              <div className="flex h-4">
                <TreeStem />
                <Twig open h={16} w={17} last />
                <span className="flex flex-1 items-center gap-1.5 bg-[#ffff00] pl-0.5">
                  <ConstraintIcon kind="intent" />
                  Design Intent (9)
                </span>
              </div>
              {objects.map((n) => {
                const sel = n === "M2.3";
                return (
                  <div key={n} className={sel ? "flex h-4 bg-[#808080] text-[#e4f4f0]" : "flex h-4"}>
                    <TreeStem />
                    <svg width="36" height="16" shapeRendering="crispEdges" className="shrink-0">
                      <path d={`M26.500 0V${n === "M4.5" ? 8 : 16}M26 8.500H36`} stroke={sel ? "#bbb" : "#555"} strokeDasharray="1 1" />
                    </svg>
                    <span className={sel ? "bg-[#ffff00] px-[3px]" : "px-[3px]"}>
                      <ConstraintIcon kind={sel ? "objsel" : "obj"} />
                    </span>
                    <span className="pl-1">{"|" + n}</span>
                  </div>
                );
              })}
              {groups.map(([label, kind], i) => (
                <TreeRow key={i} label={label} kind={kind} />
              ))}
            </div>
            <ScrollBar thumb="h-[401px]" />
            <div className="w-[3px] bg-white" />
          </div>
        </div>
      </div>
    </aside>
  );
}

/* ---------- callouts ---------- */

function Callout({ letter, className }) {
  return (
    <svg viewBox="0 0 68 36" className={"absolute h-9 w-[68px] " + className}>
      <path d="M0 18C16 14 28 .5 47 .5C59 .5 67.500 8 67.500 18S59 35.500 47 35.500C28 35.500 16 22 0 18Z" fill="#f9ab0c" />
      <text x="40" y="24" textAnchor="middle" fontSize="19" fontFamily="Roboto, sans-serif" fill="#fff">
        {letter}
      </text>
    </svg>
  );
}

export default function App() {
  return (
    <div className="relative flex h-screen overflow-hidden bg-white font-['Noto_Sans','Open_Sans',sans-serif] text-black">
      <Navigator />
      <LayoutCanvas />
      <ConstraintManager />
      <Callout letter="A" className="top-[570px] left-[45px]" />
      <Callout letter="B" className="top-[407px] left-[170px]" />
      <Callout letter="C" className="top-[184px] right-0" />
    </div>
  );
}
